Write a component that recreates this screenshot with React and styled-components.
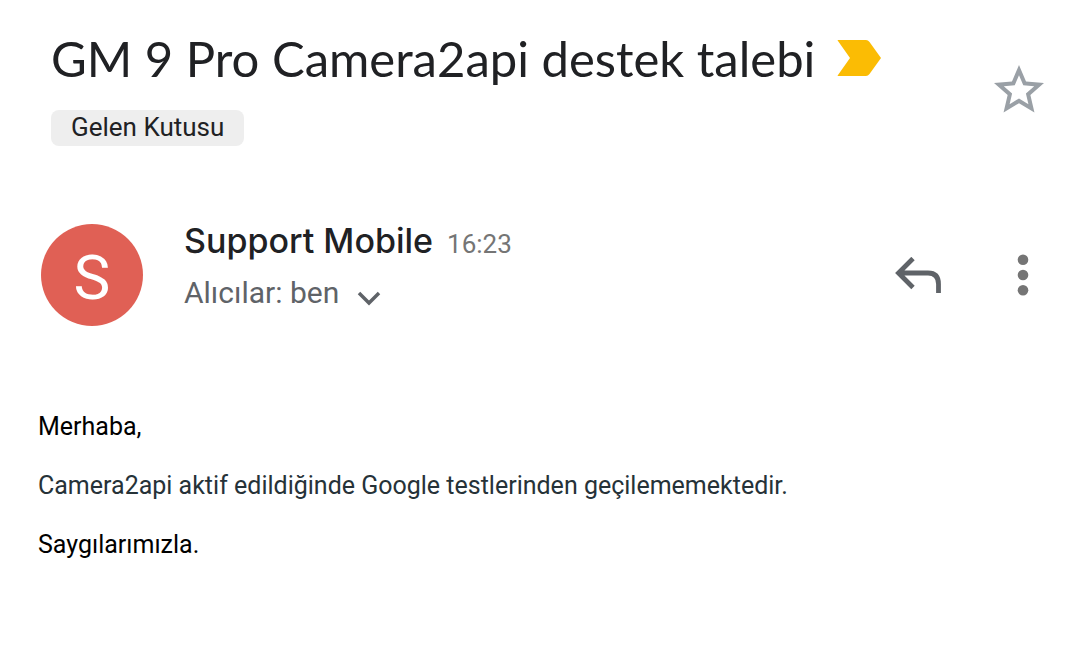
import React from 'react';
import styled, { createGlobalStyle } from 'styled-components';

const GlobalStyle = createGlobalStyle`
  * {
    box-sizing: border-box;
  }

  body {
    margin: 0;
    background-color: #ffffff;
    font-family: Roboto, 'Liberation Sans', sans-serif;
  }
`;

const MailPage = styled.main`
  padding: 30px 36px 48px 38px;
`;

const MailHeader = styled.header`
  display: flex;
  align-items: center;
  justify-content: space-between;
  padding-left: 13px;
`;

const SubjectLine = styled.div`
  display: flex;
  align-items: center;
  gap: 22px;
`;

const Subject = styled.h1`
  margin: 0;
  font-family: Lato, sans-serif;
  font-size: 49px;
  font-weight: 400;
  line-height: 56px;
  color: #202124;
`;

const FolderLabel = styled.span`
  display: inline-block;
  margin-top: 24px;
  padding: 0 20px 1px;
  border-radius: 8px;
  background-color: #eeeeee;
  font-size: 26px;
  line-height: 35px;
  color: #202124;
`;

const IconButton = styled.button`
  display: flex;
  padding: 0;
  border: none;
  background: none;
  color: ${(props) => props.$color || '#5f6368'};
  cursor: pointer;
`;

const SenderRow = styled.section`
  display: flex;
  align-items: flex-start;
  margin-top: 78px;
  padding: 0 15px 0 3px;
`;

const Avatar = styled.div`
  width: 102px;
  height: 102px;
  border-radius: 50%;
  background-color: #e06055;
  font-size: 62px;
  line-height: 108px;
  text-align: center;
  color: #ffffff;
`;

const SenderInfo = styled.div`
  flex: 1;
  margin-left: 41px;
`;

const SenderLine = styled.div`
  display: flex;
  align-items: baseline;
  gap: 14px;
  line-height: 34px;
`;

const SenderName = styled.span`
  font-family: Inter, sans-serif;
  font-size: 34px;
  font-weight: 500;
  color: #202124;
`;

const SentTime = styled.time`
  font-size: 26px;
  color: #757575;
`;

const Recipients = styled.div`
  display: flex;
  align-items: center;
  gap: 18px;
  margin-top: 12px;
  font-size: 30px;
  line-height: 40px;
  color: #5f6368;

  button {
    margin-top: 12px;
  }
`;

const Actions = styled.div`
  display: flex;
  align-items: center;
  align-self: center;
  gap: 74px;
`;

const MailBody = styled.article`
  margin-top: 85px;
`;

const Paragraph = styled.p`
  margin: 0 0 27px;
  font-size: 25px;
  line-height: 32px;
  color: ${(props) => props.$color || '#000000'};
`;

const ImportantMarker = () => (
  <svg width="44" height="36" viewBox="0 0 44 36" aria-hidden="true">
    <path d="M1 0H29Q31 0 32.500 2L44 18L32.500 34Q31 36 29 36H1Q0 36 1 35L13 18L1 1Q0 0 1 0Z" fill="#fbbc04" />
  </svg>
);

const StarIcon = () => (
  <svg width="50" height="50" viewBox="2 1.200 20 20" fill="currentColor" aria-hidden="true">
    <path d="M22 9.24l-7.19-.62L12 2 9.19 8.63 2 9.24l5.46 4.73L5.82 21 12 17.27 18.18 21l-1.63-7.03L22 9.24zM12 15.4l-3.76 2.27 1-4.28-3.32-2.88 4.38-.38L12 6.1l1.71 4.04 4.38.38-3.32 2.88 1 4.28L12 15.4z" />
  </svg>
);

const ChevronIcon = () => (
  <svg width="24" height="16" viewBox="0 0 24 16" fill="none" aria-hidden="true">
    <path d="M2 2L12 12L22 2" stroke="currentColor" strokeWidth="3.500" />
  </svg>
);

const ReplyIcon = () => (
  <svg width="48" height="36" viewBox="0 0 48 36" fill="none" aria-hidden="true">
    <path d="M18 1.500L3.500 16L18 30.500M3.500 16H33Q43.500 16 43.500 27V36" stroke="currentColor" strokeWidth="4.800" />
  </svg>
);

const MoreIcon = () => (
  <svg width="12" height="42" viewBox="0 0 12 42" fill="currentColor" aria-hidden="true">
    <circle cx="6" cy="5.700" r="5.300" />
    <circle cx="6" cy="21" r="5.300" />
    <circle cx="6" cy="36.300" r="5.300" />
  </svg>
);

const App = () => {
  return (
    <>
      <GlobalStyle />
      <MailPage>
        <MailHeader>
          <div>
            <SubjectLine>
              <Subject>GM 9 Pro Camera2api destek talebi</Subject>
              <ImportantMarker />
            </SubjectLine>
            <FolderLabel>Gelen Kutusu</FolderLabel>
          </div>
          <IconButton $color="#9aa0a6" aria-label="Yıldız ekle">
            <StarIcon />
          </IconButton>
        </MailHeader>
        <SenderRow>
          <Avatar>S</Avatar>
          <SenderInfo>
            <SenderLine>
              <SenderName>Support Mobile</SenderName>
              <SentTime>16:23</SentTime>
            </SenderLine>
            <Recipients>
              Alıcılar: ben
              <IconButton aria-label="Ayrıntıları göster">
                <ChevronIcon />
              </IconButton>
            </Recipients>
          </SenderInfo>
          <Actions>
            <IconButton aria-label="Yanıtla">
              <ReplyIcon />
            </IconButton>
            <IconButton $color="#757575" aria-label="Diğer seçenekler">
              <MoreIcon />
            </IconButton>
          </Actions>
        </SenderRow>
        <MailBody>
          <Paragraph>Merhaba,</Paragraph>
          <Paragraph $color="#263238">
            Camera2api aktif edildiğinde Google testlerinden geçilememektedir.
          </Paragraph>
          <Paragraph>Saygılarımızla.</Paragraph>
        </MailBody>
      </MailPage>
    </>
  );
};

export default App;
